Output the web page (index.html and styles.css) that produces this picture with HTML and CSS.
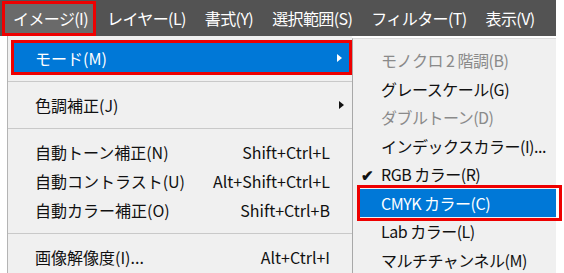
FILE: index.html
```html
<!DOCTYPE html>
<html lang="ja">
<head>
    <meta charset="UTF-8">
    <title>イメージメニュー</title>
    <link rel="stylesheet" href="styles.css">
</head>
<body>
    <div class="menubar">
        <span class="top-item active">イメージ(I)</span>
        <span class="top-item">レイヤー(L)</span>
        <span class="top-item">書式(Y)</span>
        <span class="top-item">選択範囲(S)</span>
        <span class="top-item">フィルター(T)</span>
        <span class="top-item">表示(V)</span>
    </div>
    <div class="menus">
        <ul class="menu main">
            <li class="item current"><span>モード(M)</span><span></span><span class="arrow"></span></li>
            <li class="sep"></li>
            <li class="item"><span>色調補正(J)</span><span></span><span class="arrow"></span></li>
            <li class="sep"></li>
            <li class="item"><span>自動トーン補正(N)</span><span class="key">Shift+Ctrl+L</span><span></span></li>
            <li class="item"><span>自動コントラスト(U)</span><span class="key">Alt+Shift+Ctrl+L</span><span></span></li>
            <li class="item"><span>自動カラー補正(O)</span><span class="key">Shift+Ctrl+B</span><span></span></li>
            <li class="sep"></li>
            <li class="item"><span>画像解像度(I)...</span><span class="key">Alt+Ctrl+I</span><span></span></li>
        </ul>
        <ul class="menu sub">
            <li class="item disabled"><span></span><span>モノクロ 2 階調(B)</span></li>
            <li class="item"><span></span><span>グレースケール(G)</span></li>
            <li class="item disabled"><span></span><span>ダブルトーン(D)</span></li>
            <li class="item"><span></span><span>インデックスカラー(I)...</span></li>
            <li class="item"><span class="check">✔</span><span>RGB カラー(R)</span></li>
            <li class="item current"><span></span><span>CMYK カラー(C)</span></li>
            <li class="item"><span></span><span>Lab カラー(L)</span></li>
            <li class="item"><span></span><span>マルチチャンネル(M)</span></li>
        </ul>
    </div>
</body>
</html>
```

FILE: styles.css
```css
* { margin: 0; padding: 0; box-sizing: border-box; }
body {
    font-family: "Noto Sans CJK JP", "Noto Sans", sans-serif;
    font-size: 16px;
    color: #111;
    background: #fff;
    width: 564px;
    height: 273px;
    overflow: hidden;
}
.menubar {
    width: 556px;
    height: 36px;
    background: #535353;
    display: flex;
    align-items: flex-start;
    padding: 4px 0 0 5px;
    letter-spacing: -0.6px;
}
.top-item {
    height: 29px;
    line-height: 29px;
    padding: 0 5px 0 8px;
    margin-right: 6px;
    color: #fff;
    white-space: nowrap;
}
.top-item.active {
    background: #6a6a6a;
    outline: 3px solid #ee0000;
}
.menus { display: flex; align-items: flex-start; padding-left: 7px; }
.menu { list-style: none; background: #f0f0f0; height: 240px; }
.main {
    width: 345px;
    border-left: 1px solid #b4b4b4;
    padding-top: 4px;
}
.sub {
    width: 204px;
    margin-top: 2px;
    border-left: 1px solid #a8a8a8;
    border-top: 1px solid #dcdcdc;
    padding-top: 7px;
    letter-spacing: -0.5px;
}
.main .item {
    display: grid;
    grid-template-columns: 1fr auto 22px;
    align-items: center;
    height: 29px;
    padding-left: 27px;
    white-space: nowrap;
}
.main .item.current {
    margin: 3px 3px 0 6px;
    padding-left: 21px;
    grid-template-columns: 1fr auto 19px;
}
.item.current {
    position: relative;
    background: #0078d7;
    color: #fff;
}
.item.current::after {
    content: "";
    position: absolute;
    inset: -3px;
    border: 3px solid #ee0000;
}
.key { text-align: right; }
.arrow {
    justify-self: center;
    width: 0;
    height: 0;
    border-top: 4.5px solid transparent;
    border-bottom: 4.5px solid transparent;
    border-left: 5px solid #111;
}
.current .arrow { border-left-color: #fff; }
.sep { height: 18px; display: flex; align-items: center; }
.sep::before { content: ""; flex: 1; height: 1px; background: #c9c9c9; }
.sub .item {
    display: grid;
    grid-template-columns: 28px 1fr;
    align-items: center;
    height: 28.5px;
    white-space: nowrap;
}
.sub .item.current {
    margin-left: 7px;
    grid-template-columns: 21px 1fr;
}
.sub .item.current::after { inset: -4px -6px -4px -3px; }
.check { text-align: center; font-size: 15px; font-weight: bold; }
.disabled { color: #8a8a8a; }
```
